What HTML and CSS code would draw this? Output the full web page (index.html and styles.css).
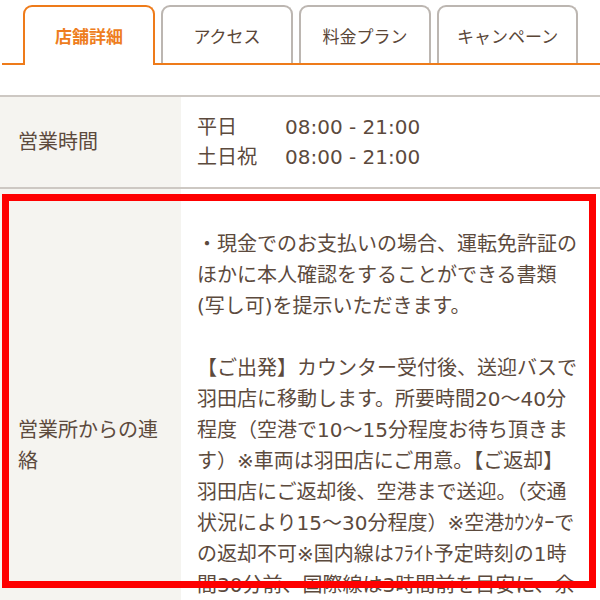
FILE: index.html
```html
<!DOCTYPE html>
<html lang="ja">
<head>
  <meta charset="UTF-8" />
  <meta name="viewport" content="width=device-width, initial-scale=1.0"/>
  <title>店舗詳細</title>
  <link rel="stylesheet" href="styles.css">
</head>
<body>

  <div class="page">

    <!-- タブ -->
    <nav class="tabs">
      <a class="tab active" href="#">店舗詳細</a>
      <a class="tab" href="#">アクセス</a>
      <a class="tab" href="#">料金プラン</a>
      <a class="tab" href="#">キャンペーン</a>
    </nav>

    <!-- 店舗情報 -->
    <table class="shop-info">
      <tr>
        <th>営業時間</th>
        <td class="hours">
          <div class="hours-row"><span>平日</span><span>08:00 - 21:00</span></div>
          <div class="hours-row"><span>土日祝</span><span>08:00 - 21:00</span></div>
        </td>
      </tr>
      <tr>
        <th>営業所からの連絡</th>
        <td class="notice">
          <p>・現金でのお支払いの場合、運転免許証の<br>ほかに本人確認をすることができる書類<br>(写し可)を提示いただきます。</p>
          <p>【ご出発】カウンター受付後、送迎バスで<br>羽田店に移動します。所要時間20～40分<br>程度（空港で10～15分程度お待ち頂きま<br>す）※車両は羽田店にご用意。【ご返却】<br>羽田店にご返却後、空港まで送迎。（交通<br>状況により15～30分程度）※空港ｶｳﾝﾀｰで<br>の返却不可※国内線はﾌﾗｲﾄ予定時刻の1時<br>間30分前、国際線は3時間前を目安に、余<br>裕をもってご返却ください。（繁忙期は<br>混雑が予想されます）</p>
        </td>
      </tr>
    </table>

    <!-- 注目枠 -->
    <div class="highlight"></div>

  </div>

</body>
</html>
```

FILE: styles.css
```css
* {
  margin: 0;
  padding: 0;
  box-sizing: border-box;
}

html, body {
  overflow: hidden;
}

body {
  font-family: "DejaVu Sans", "Noto Sans CJK JP", sans-serif;
  color: #5c4a3d;
  background: #fff;
}

.page {
  position: relative;
}

/* Tabs */
.tabs {
  display: flex;
  gap: 6px;
  margin-left: 2px;
  padding: 5px 0 0 21px;
  border-bottom: 2px solid #ee7b1a;
}

.tab {
  display: flex;
  align-items: center;
  justify-content: center;
  min-width: 132px;
  height: 58px;
  padding: 0 18px;
  font-size: 17px;
  color: #5a4637;
  text-decoration: none;
  background: #fff;
  border: 2px solid #bcb6b1;
  border-bottom: none;
  border-radius: 9px 9px 0 0;
}

.tab.active {
  height: 60px;
  margin-bottom: -2px;
  padding-bottom: 2px;
  font-weight: bold;
  color: #ee7d20;
  border-color: #ee7b1a;
}

/* Shop info table */
.shop-info {
  width: 100%;
  margin-top: 30px;
  border-collapse: collapse;
  font-size: 20px;
}

.shop-info tr {
  border-top: 2px solid #cdc8c3;
  border-bottom: 2px solid #cdc8c3;
}

.shop-info th {
  width: 181px;
  padding: 0 18px;
  font-weight: normal;
  text-align: left;
  line-height: 31px;
  vertical-align: middle;
  background: #f5f4f0;
}

.shop-info td {
  padding: 15px 4px 15px 16px;
  vertical-align: top;
}

.hours-row {
  display: grid;
  grid-template-columns: 88px auto;
  line-height: 30px;
}

.shop-info td.notice {
  padding-top: 40px;
  padding-bottom: 40px;
  line-height: 31px;
}

.notice p + p {
  margin-top: 31px;
}

/* Red frame over the notice row */
.highlight {
  position: absolute;
  left: 2px;
  top: 194px;
  width: 594px;
  height: 394px;
  border: 7px solid #fe0000;
  pointer-events: none;
}
```
